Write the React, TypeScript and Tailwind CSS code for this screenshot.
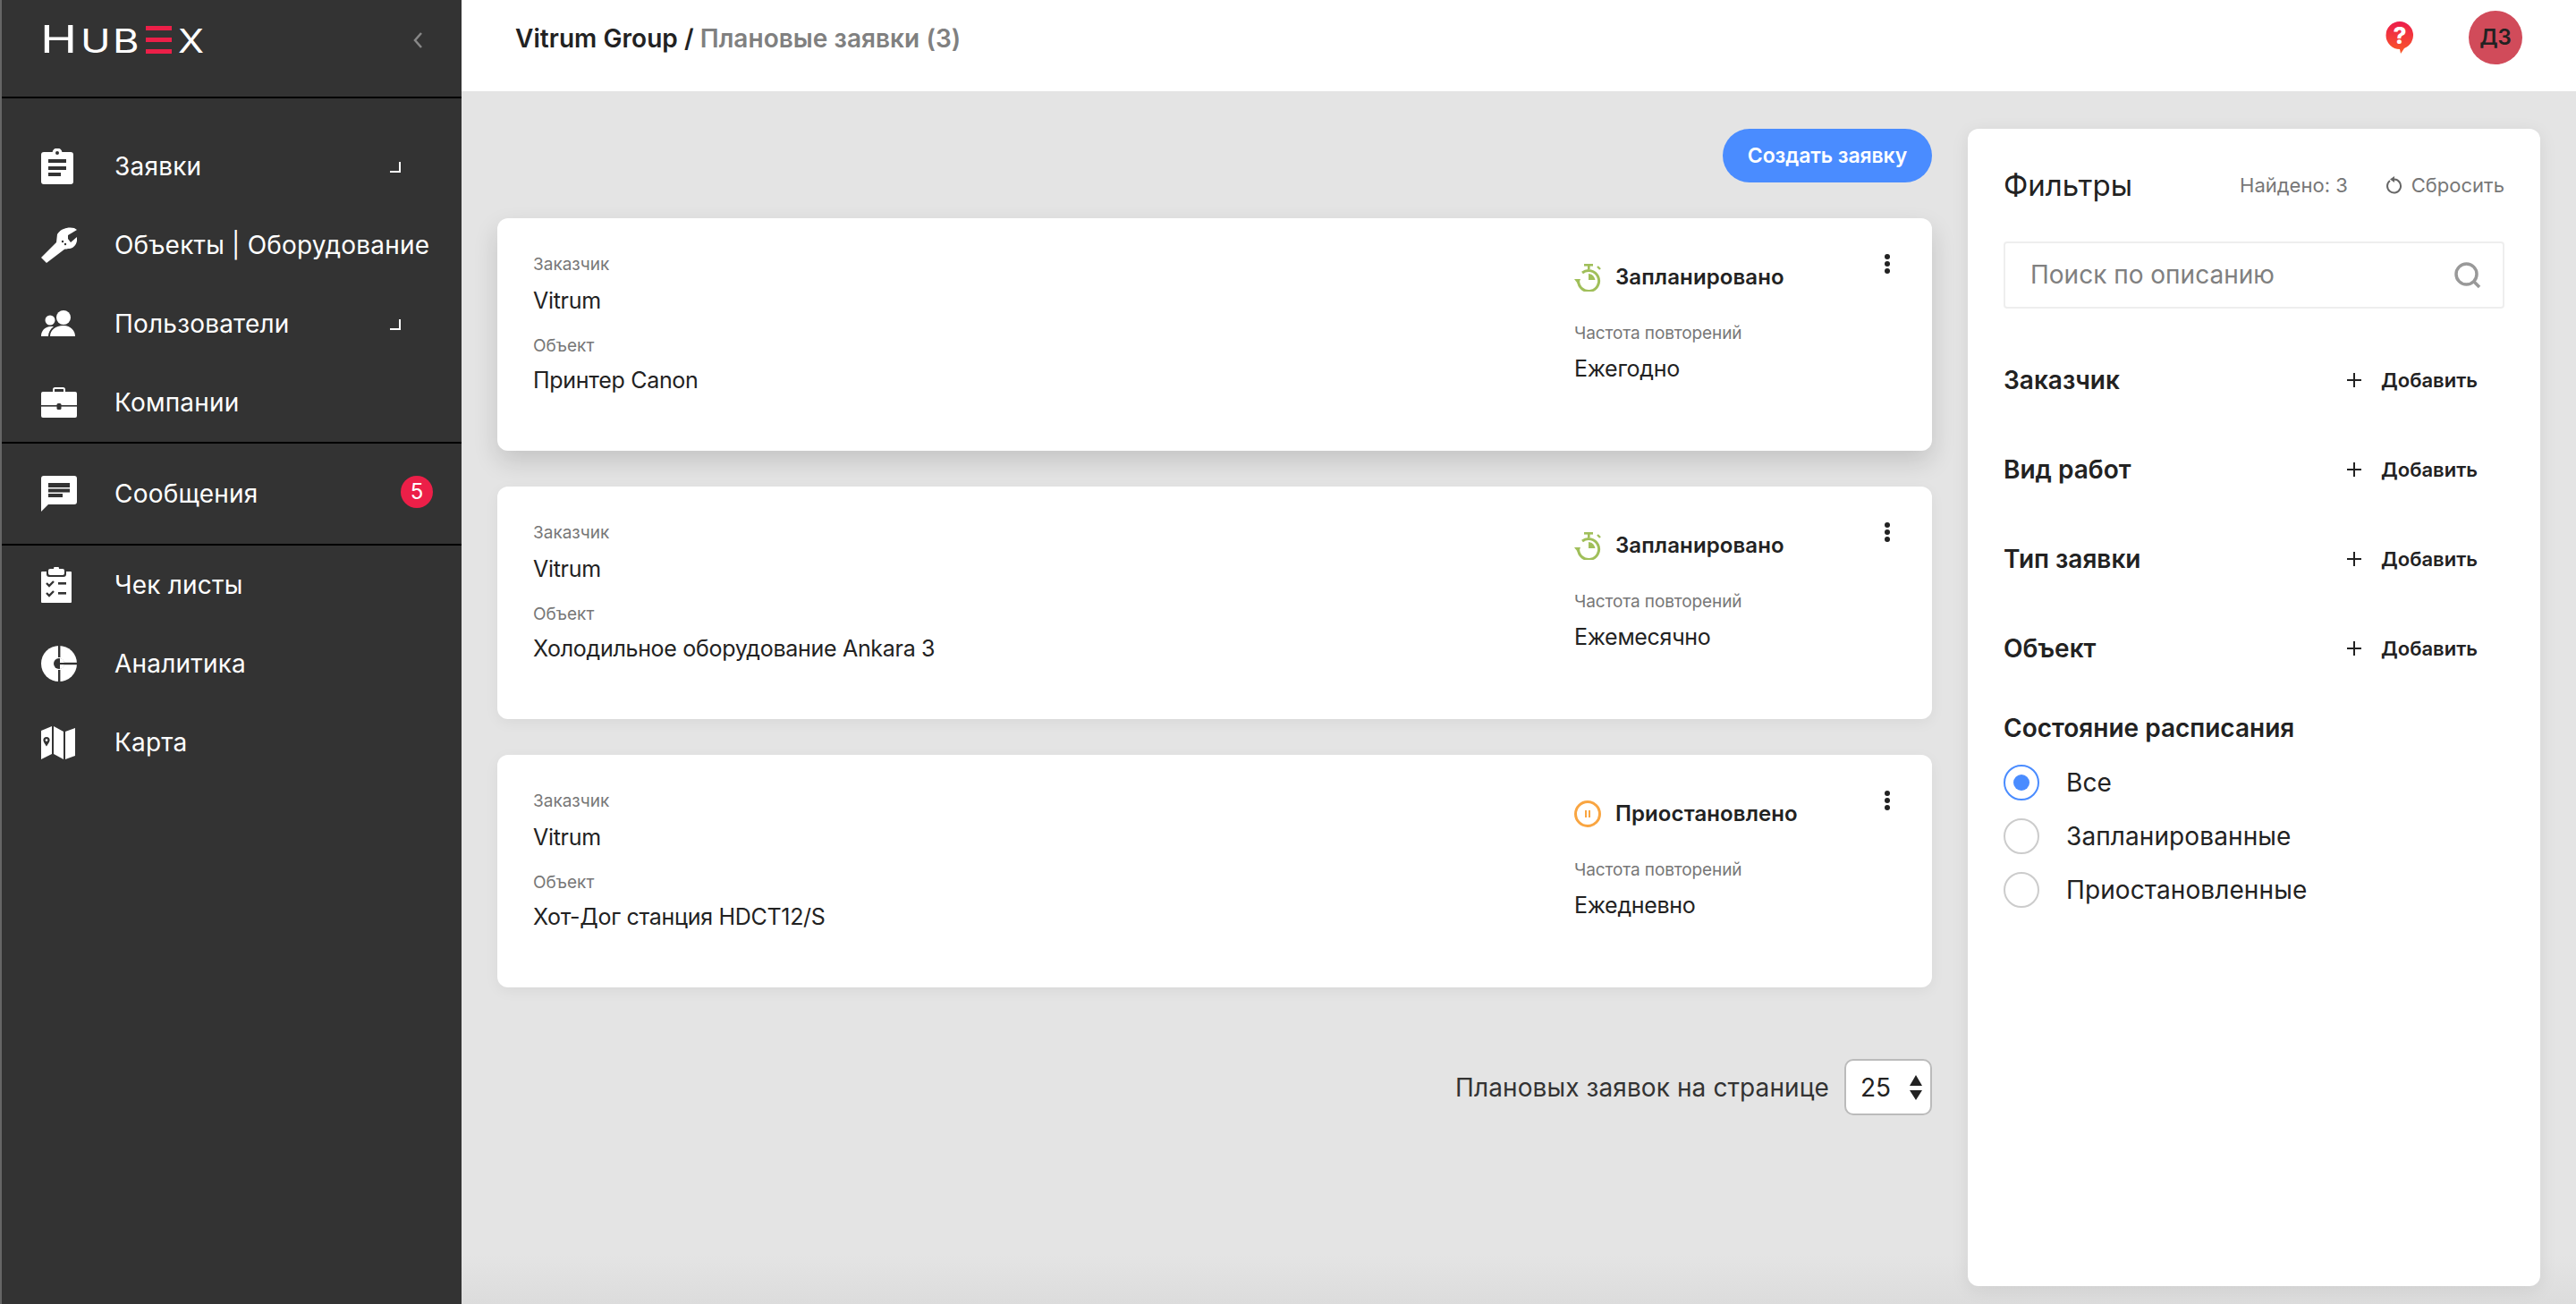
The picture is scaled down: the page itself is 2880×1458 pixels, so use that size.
import React from "react";

const Clip = () => (
  <svg width="36" height="40" viewBox="0 0 36 40">
    <rect x="0" y="4" width="36" height="36" rx="3" fill="#fff" />
    <circle cx="18" cy="5" r="5.5" fill="#fff" />
    <circle cx="18" cy="5" r="2" fill="#333" />
    <rect x="8" y="12" width="20" height="4" fill="#333" />
    <rect x="8" y="20" width="20" height="4" fill="#333" />
    <rect x="8" y="27" width="14" height="4" fill="#333" />
  </svg>
);
const Wrench = () => (
  <svg width="40" height="40" viewBox="0 0 40 40">
    <path d="M0 34 L19 15 L27 24 L6 40 Z" fill="#fff" />
    <path d="M18 8 C21 2 30 -1 37 1 L40 3 L30 9 L30 13 L33 17 L40 11 C41 18 37 24 30 24 C25 26 19 22 17 17 Z" fill="#fff" />
    <circle cx="24" cy="16" r="1.2" fill="#333" />
    <circle cx="27" cy="19" r="1.2" fill="#333" />
  </svg>
);
const Users = () => (
  <svg width="38" height="30" viewBox="0 0 38 30">
    <circle cx="10" cy="11" r="5.5" fill="#fff" />
    <circle cx="25" cy="8" r="8" fill="#fff" />
    <path d="M10 29 C10 22 16 17 25 17 C33 17 38 23 38 29 Z" fill="#fff" />
    <path d="M0 29 C0 23 4 18 11 18 L14 18 C10 21 8 25 8 29 Z" fill="#fff" />
  </svg>
);
const Brief = () => (
  <svg width="40" height="34" viewBox="0 0 40 34">
    <path d="M14 6 V2.5 Q14 1 15.5 1 H24.5 Q26 1 26 2.5 V6" fill="none" stroke="#fff" strokeWidth="2" />
    <rect x="0" y="5" width="40" height="29" rx="2" fill="#fff" />
    <rect x="0" y="20" width="40" height="1.6" fill="#333" />
    <rect x="17.5" y="18" width="5" height="7" rx="1.5" fill="#333" />
  </svg>
);
const Msg = () => (
  <svg width="40" height="40" viewBox="0 0 40 40">
    <path d="M3 0 H37 Q40 0 40 3 V29 Q40 32 37 32 H8 L0 40 V3 Q0 0 3 0 Z" fill="#fff" />
    <rect x="8" y="8" width="24" height="5" fill="#333" />
    <rect x="8" y="14.5" width="24" height="4" fill="#333" />
    <rect x="8" y="20" width="16" height="4" fill="#333" />
  </svg>
);
const Check = () => (
  <svg width="34" height="40" viewBox="0 0 34 40">
    <path d="M1 5 H33 Q34 5 34 6 V39 Q34 40 33 40 H1 Q0 40 0 39 V6 Q0 5 1 5 Z" fill="#fff" />
    <rect x="6" y="0" width="22" height="11" rx="3" fill="#333" />
    <rect x="8" y="2" width="18" height="7" rx="2" fill="#fff" />
    <circle cx="17" cy="2" r="3" fill="#fff" />
    <path d="M6 18 L9 21 L14 16 M6 29 L9 32 L14 27" fill="none" stroke="#333" strokeWidth="2.4" />
    <rect x="19" y="17" width="9" height="2.6" fill="#333" />
    <rect x="19" y="28" width="9" height="2.6" fill="#333" />
  </svg>
);
const Pie = () => (
  <svg width="40" height="40" viewBox="0 0 40 40">
    <circle cx="20" cy="20" r="20" fill="#fff" />
    <rect x="19" y="0" width="2.4" height="13" fill="#333" />
    <rect x="19" y="27" width="2.4" height="13" fill="#333" />
    <rect x="21" y="18.8" width="19" height="2.4" fill="#333" />
    <circle cx="20" cy="20" r="6" fill="#333" />
    <path d="M21 14 A6 6 0 0 1 26 19 L21 19 Z M21 26 A6 6 0 0 0 26 21 L21 21 Z" fill="#fff" />
  </svg>
);
const MapI = () => (
  <svg width="38" height="37" viewBox="0 0 38 37">
    <path d="M0 5 L12 0 V31 L0 37 Z" fill="#fff" />
    <path d="M14 0 L25 6 V37 L14 31 Z" fill="#fff" />
    <path d="M27 6 L38 2 V33 L27 37 Z" fill="#fff" />
    <path d="M6 12 A3.6 3.6 0 0 1 9.6 15.6 C9.6 18 6 22.5 6 22.5 C6 22.5 2.4 18 2.4 15.6 A3.6 3.6 0 0 1 6 12 Z" fill="#333" />
    <circle cx="6" cy="15.6" r="1.3" fill="#fff" />
  </svg>
);
const Corner = () => (
  <svg width="12" height="12" viewBox="0 0 12 12">
    <path d="M0 11 H11 V0" fill="none" stroke="#fff" strokeWidth="2" />
  </svg>
);

const NavRow = ({ icon, label, corner, h = "h-[88px]", badge }: { icon: React.ReactNode; label: string; corner?: boolean; h?: string; badge?: string }) => (
  <div className={`flex items-center ${h} pl-[42px] pr-[32px]`}>
    <div className="flex w-[84px] shrink-0 items-center justify-start pl-[2px]">{icon}</div>
    <span className="flex-1 whitespace-nowrap text-[28px] leading-8 tracking-[0.2px] text-white">{label}</span>
    {corner && <div className="mr-[36px] mt-[2px]"><Corner /></div>}
    {badge && (
      <span className="flex h-9 w-9 -translate-y-[2px] items-center justify-center rounded-full bg-[#ec1f48] text-[24px] leading-none text-white">{badge}</span>
    )}
  </div>
);

const Logo = () => (
  <div className="-ml-[3px] flex h-[32px] items-end text-white">
    <span className="w-[34px] origin-left scale-x-[1.32] text-[42px] font-normal leading-[32px]">H</span>
    <span className="ml-[11px] w-[27px] origin-left scale-x-[1.22] text-[37px] font-normal leading-[28px]">U</span>
    <span className="ml-[9px] w-[27px] origin-left scale-x-[1.22] text-[37px] font-normal leading-[28px]">B</span>
    <div className="ml-[10px] flex h-[31px] w-[29px] flex-col justify-between">
      <div className="h-[5px] bg-[#ec1f48]" />
      <div className="h-[5px] bg-[#ec1f48]" />
      <div className="h-[5px] bg-[#ec1f48]" />
    </div>
    <span className="ml-[7px] w-[28px] origin-left scale-x-[1.15] text-[37px] font-normal leading-[28px]">X</span>
  </div>
);

const Field = ({ label, value, first }: { label: string; value: string; first?: boolean }) => (
  <div className={first ? "" : "mt-[23px]"}>
    <div className="h-6 text-[19px] leading-6 text-[#777]">{label}</div>
    <div className={`${first ? "mt-[12px]" : "mt-[10px]"} h-8 text-[25px] leading-8 -tracking-[0.3px] text-[#222]`}>{value}</div>
  </div>
);

const Stopwatch = () => (
  <svg width="30" height="31" viewBox="0 0 30 31">
    <rect x="11" y="0" width="10" height="2.6" fill="#a0bf5a" />
    <rect x="15" y="2" width="2.6" height="4" fill="#a0bf5a" />
    <path d="M26 3 L29 6" stroke="#a0bf5a" strokeWidth="2.4" />
    <path d="M4.6 19 A11.5 11.5 0 1 0 9 10" fill="none" stroke="#a0bf5a" strokeWidth="3" />
    <path d="M0 17 L7 17 L4.6 23 Z" fill="#a0bf5a" />
    <path d="M16 11 A8 8 0 0 1 23.5 18 L16 18 Z" fill="#a0bf5a" />
  </svg>
);
const Pause = () => (
  <svg width="30" height="30" viewBox="0 0 30 30">
    <circle cx="15" cy="15" r="13.5" fill="none" stroke="#f9a541" strokeWidth="3" />
    <rect x="12" y="11" width="2" height="8" fill="#f9a541" />
    <rect x="16" y="11" width="2" height="8" fill="#f9a541" />
  </svg>
);

const Card = ({ value, status, paused, freq, strong }: { value: string; status: string; paused?: boolean; freq: string; strong?: boolean }) => (
  <div className={`flex h-[260px] rounded-[12px] bg-white pl-10 pr-[47px] pt-10 ${strong ? "shadow-[0_12px_28px_rgba(0,0,0,0.14)]" : "shadow-[0_4px_16px_rgba(0,0,0,0.05)]"}`}>
    <div className="flex-1">
      <Field first label="Заказчик" value="Vitrum" />
      <Field label="Объект" value={value} />
    </div>
    <div className="w-[347px] pt-[10px]">
      <div className="flex h-8 items-center">
        <div className="w-[46px] shrink-0">{paused ? <Pause /> : <Stopwatch />}</div>
        <span className="text-[24px] font-semibold leading-8 tracking-[0.1px] text-[#222]">{status}</span>
      </div>
      <div className="mt-[35px] h-6 text-[19px] leading-6 -tracking-[0.1px] text-[#777]">Частота повторений</div>
      <div className="mt-[11px] h-8 text-[25px] leading-8 -tracking-[0.3px] text-[#222]">{freq}</div>
    </div>
    <div className="flex w-[6px] flex-col gap-[2px]">
      <div className="h-[6px] w-[6px] rounded-full bg-[#222]" />
      <div className="h-[6px] w-[6px] rounded-full bg-[#222]" />
      <div className="h-[6px] w-[6px] rounded-full bg-[#222]" />
    </div>
  </div>
);

const FilterRow = ({ label }: { label: string }) => (
  <div className="flex h-[100px] items-center">
    <span className="flex-1 text-[28px] font-semibold leading-8 text-[#222]">{label}</span>
    <div className="flex w-[176px] items-center">
      <svg width="16" height="16" viewBox="0 0 16 16">
        <path d="M8 0 V16 M0 8 H16" stroke="#222" strokeWidth="2" />
      </svg>
      <span className="ml-[22px] text-[22px] font-semibold leading-8 text-[#222]">Добавить</span>
    </div>
  </div>
);

const Radio = ({ label, on }: { label: string; on?: boolean }) => (
  <div className="flex h-[60px] items-center">
    <div className={`flex h-10 w-10 items-center justify-center rounded-full border-2 ${on ? "border-[#4a8cff]" : "border-[#ccc]"}`}>
      {on && <div className="h-[18px] w-[18px] rounded-full bg-[#4a8cff]" />}
    </div>
    <span className="ml-[30px] text-[28px] leading-8 tracking-[0.1px] text-[#222]">{label}</span>
  </div>
);

export default function App() {
  return (
    <div className="flex h-[1458px] w-[2880px] overflow-hidden bg-[#e4e4e4] font-['Inter','Noto_Sans',sans-serif]">
      <aside className="flex h-full w-[516px] shrink-0 flex-col border-l-2 border-[#666] bg-[#333]">
        <div className="flex h-[110px] items-start justify-between border-b-2 border-black pl-[46px] pr-[44px] pt-[28px]">
          <Logo />
          <svg width="10" height="18" viewBox="0 0 10 18" className="mt-[8px]">
            <path d="M9 1 L2 9 L9 17" fill="none" stroke="#888" strokeWidth="2.5" />
          </svg>
        </div>
        <nav className="pt-8">
          <NavRow icon={<Clip />} label="Заявки" corner />
          <NavRow icon={<Wrench />} label="Объекты | Оборудование" />
          <NavRow icon={<Users />} label="Пользователи" corner />
          <NavRow icon={<Brief />} label="Компании" />
        </nav>
        <div className="border-y-2 border-black">
          <NavRow icon={<Msg />} label="Сообщения" h="h-[112px]" badge="5" />
        </div>
        <nav>
          <NavRow icon={<Check />} label="Чек листы" />
          <NavRow icon={<Pie />} label="Аналитика" />
          <NavRow icon={<MapI />} label="Карта" />
        </nav>
      </aside>

      <div className="flex min-w-0 flex-1 flex-col">
        <header className="flex h-[102px] shrink-0 items-start bg-white pl-[60px] pr-[60px]">
          <div className="mt-[26px] text-[28px] font-semibold leading-[34px] tracking-[0.05px] text-[#222]">
            Vitrum Group / <span className="text-[#808080]">Плановые заявки (3)</span>
          </div>
          <div className="ml-auto flex items-start">
            <svg width="32" height="37" viewBox="0 0 32 37" className="mt-[24px]">
              <defs>
                <linearGradient id="hg" x1="0" y1="0" x2="0" y2="1">
                  <stop offset="0" stopColor="#ec1c4c" />
                  <stop offset="1" stopColor="#fa5a28" />
                </linearGradient>
              </defs>
              <path d="M16 0 A15.5 15.5 0 0 1 21 30 L17 36 L16 31 A15.5 15.5 0 0 1 16 0 Z" fill="url(#hg)" />
              <text x="16" y="25" textAnchor="middle" fontSize="26" fontWeight="800" fill="#fff" fontFamily="Inter">?</text>
            </svg>
            <div className="ml-[61px] mt-[12px] flex h-[60px] w-[60px] items-center justify-center rounded-full bg-[#d14b5a] text-[24px] font-semibold text-[#222]">ДЗ</div>
          </div>
        </header>

        <main className="flex min-h-0 flex-1 gap-10 bg-[linear-gradient(to_bottom,#e4e4e4_96%,#dcdcdc_100%)] pb-5 pl-10 pr-10 pt-[42px]">
          <section className="flex w-[1604px] shrink-0 flex-col">
            <div className="flex justify-end">
              <button className="h-[60px] w-[234px] rounded-full bg-[#4a8cff] text-[23px] font-semibold -tracking-[0.1px] text-white">Создать заявку</button>
            </div>
            <div className="mt-10 flex flex-col gap-10">
              <Card strong value="Принтер Canon" status="Запланировано" freq="Ежегодно" />
              <Card value="Холодильное оборудование Ankara 3" status="Запланировано" freq="Ежемесячно" />
              <Card value="Хот-Дог станция HDCT12/S" status="Приостановлено" paused freq="Ежедневно" />
            </div>
            <div className="mt-20 flex items-center justify-end">
              <span className="text-[28px] leading-8 tracking-[0.1px] text-[#333]">Плановых заявок на странице</span>
              <div className="ml-[17px] flex h-[63px] w-[98px] items-center justify-between rounded-[10px] border-2 border-[#bbb] bg-white pl-4 pr-[9px]">
                <span className="text-[28px] leading-8 text-[#222]">25</span>
                <svg width="14" height="28" viewBox="0 0 14 28">
                  <path d="M7 0 L14 12 H0 Z M0 17 H14 L7 28 Z" fill="#222" />
                </svg>
              </div>
            </div>
          </section>

          <section className="flex h-full w-[640px] shrink-0 flex-col rounded-[12px] bg-white px-10 shadow-[0_4px_20px_rgba(0,0,0,0.08)]">
            <div className="flex h-[126px] items-center">
              <span className="flex-1 text-[33px] leading-10 text-[#222]">Фильтры</span>
              <span className="text-[22px] text-[#777]">Найдено: 3</span>
              <svg width="18" height="20" viewBox="0 0 18 20" className="ml-[43px]">
                <path d="M4 5 A7.5 7.5 0 1 0 9 3.5" fill="none" stroke="#666" strokeWidth="2" />
                <path d="M9 0 L4 3.5 L9 7 Z" fill="#666" />
              </svg>
              <span className="ml-[10px] text-[22px] text-[#777]">Сбросить</span>
            </div>
            <div className="flex h-[75px] items-center justify-between rounded-[4px] border-2 border-[#eee] pb-[2px] pl-7 pr-6">
              <span className="text-[28px] text-[#808080]">Поиск по описанию</span>
              <svg width="30" height="30" viewBox="0 0 30 30" className="mt-[2px]">
                <circle cx="13.5" cy="13.5" r="11.5" fill="none" stroke="#999" strokeWidth="3.5" />
                <path d="M21 21 L28 28" stroke="#999" strokeWidth="3.5" />
              </svg>
            </div>
            <div className="mt-[30px]">
              <FilterRow label="Заказчик" />
              <FilterRow label="Вид работ" />
              <FilterRow label="Тип заявки" />
              <FilterRow label="Объект" />
            </div>
            <div className="mt-[23px] h-8 text-[28px] font-semibold leading-8 text-[#222]">Состояние расписания</div>
            <div className="mt-[15px]">
              <Radio on label="Все" />
              <Radio label="Запланированные" />
              <Radio label="Приостановленные" />
            </div>
          </section>
        </main>
      </div>
    </div>
  );
}
